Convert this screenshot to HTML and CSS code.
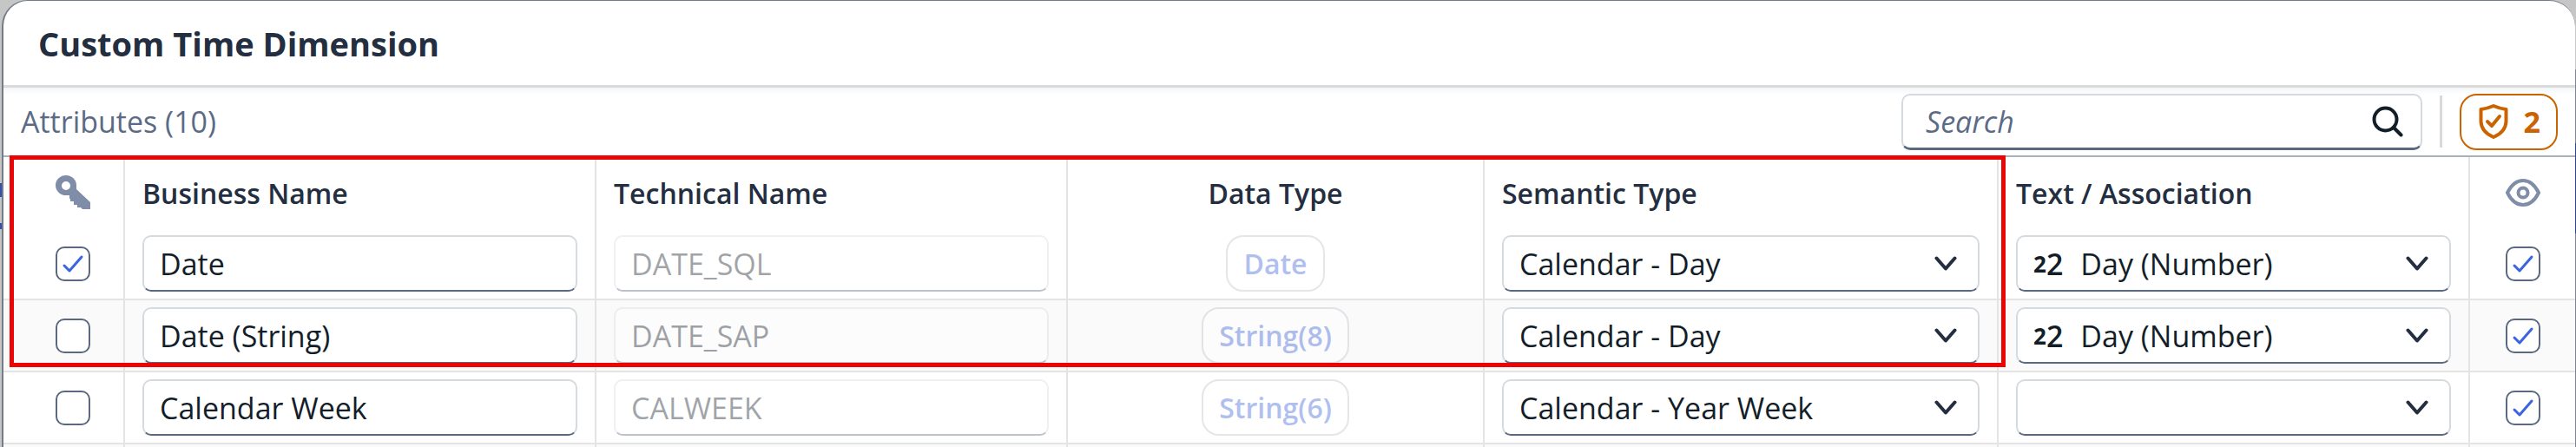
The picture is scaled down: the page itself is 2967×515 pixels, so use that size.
FILE: index.html
```html
<!DOCTYPE html>
<html lang="en">
<head>
  <meta charset="UTF-8">
  <meta name="viewport" content="width=device-width, initial-scale=1.0">
  <title>Custom Time Dimension</title>
  <link rel="stylesheet" href="styles.css">
</head>
<body>
  <!-- Shared icons -->
  <svg class="sprite" aria-hidden="true">
    <symbol id="chevron" viewBox="0 0 26 18">
      <path d="M2.500 2.500L13 14.500L23.500 2.500" fill="none" stroke="currentColor" stroke-width="4" stroke-linecap="round" stroke-linejoin="round"/>
    </symbol>
  </svg>

  <div class="dialog" role="dialog" aria-labelledby="dialogTitle">
    <header class="dialog-header">
      <h1 id="dialogTitle">Custom Time Dimension</h1>
    </header>

    <div class="toolbar">
      <h2>Attributes (10)</h2>
      <div class="field search">
        <input type="search" placeholder="Search" aria-label="Search">
        <svg class="search-icon" viewBox="0 0 36 36" aria-hidden="true">
          <circle cx="15.500" cy="15.500" r="13" fill="none" stroke="currentColor" stroke-width="4"/>
          <path d="M25.500 25.500L33.500 33.500" stroke="currentColor" stroke-width="4" stroke-linecap="round"/>
        </svg>
      </div>
      <span class="separator"></span>
      <button class="validation" aria-label="2 validation messages">
        <svg viewBox="0 0 34 40" aria-hidden="true">
          <path d="M17 2Q24 5 31.500 6V20Q31 32 17 38Q3 32 2.500 20V6Q10 5 17 2Z" fill="none" stroke="currentColor" stroke-width="4" stroke-linejoin="round"/>
          <path d="M10 20L15 25L24 14" fill="none" stroke="currentColor" stroke-width="4" stroke-linecap="round" stroke-linejoin="round"/>
        </svg>
        <span>2</span>
      </button>
    </div>

    <div class="table-wrap">
      <table>
        <colgroup>
          <col class="col-key">
          <col class="col-name">
          <col class="col-name">
          <col class="col-type">
          <col class="col-semantic">
          <col class="col-name">
          <col class="col-visible">
        </colgroup>
        <thead>
          <tr>
            <th class="key" aria-label="Key">
              <svg class="header-icon" viewBox="0 0 40 40" aria-hidden="true">
                <path fill-rule="evenodd" d="M12 0A12 11.500 0 0 1 24 12V16L40 31V39H31L29 37H25V34H21V30H17V27H16V23H12A12 11.500 0 0 1 12 0ZM12 7A5 5 0 1 0 12 17A5 5 0 1 0 12 7Z" fill="currentColor"/>
              </svg>
            </th>
            <th>Business Name</th>
            <th>Technical Name</th>
            <th class="center">Data Type</th>
            <th>Semantic Type</th>
            <th>Text / Association</th>
            <th class="center" aria-label="Visible">
              <svg class="header-icon" viewBox="0 0 40 40" aria-hidden="true">
                <path d="M2 20Q9 6 20 6T38 20Q31 34 20 34T2 20Z" fill="none" stroke="currentColor" stroke-width="4" stroke-linejoin="round"/>
                <circle cx="20" cy="20" r="5.500" fill="none" stroke="currentColor" stroke-width="4"/>
              </svg>
            </th>
          </tr>
        </thead>
        <tbody>
          <tr>
            <td class="key"><input type="checkbox" aria-label="Key" checked></td>
            <td><input class="field" type="text" aria-label="Business name" value="Date"></td>
            <td><input class="field" type="text" aria-label="Technical name" value="DATE_SQL" disabled></td>
            <td class="center"><button class="type" disabled>Date</button></td>
            <td>
              <div class="field select">
                <select aria-label="Semantic type"><option>Calendar - Day</option></select>
                <svg class="chevron" aria-hidden="true"><use href="#chevron"/></svg>
              </div>
            </td>
            <td>
              <div class="field select">
                <span class="number-icon"><small>2</small>2</span>
                <select aria-label="Text association"><option>Day (Number)</option></select>
                <svg class="chevron" aria-hidden="true"><use href="#chevron"/></svg>
              </div>
            </td>
            <td class="center"><input type="checkbox" aria-label="Visible" checked></td>
          </tr>
          <tr>
            <td class="key"><input type="checkbox" aria-label="Key"></td>
            <td><input class="field" type="text" aria-label="Business name" value="Date (String)"></td>
            <td><input class="field" type="text" aria-label="Technical name" value="DATE_SAP" disabled></td>
            <td class="center"><button class="type" disabled>String(8)</button></td>
            <td>
              <div class="field select">
                <select aria-label="Semantic type"><option>Calendar - Day</option></select>
                <svg class="chevron" aria-hidden="true"><use href="#chevron"/></svg>
              </div>
            </td>
            <td>
              <div class="field select">
                <span class="number-icon"><small>2</small>2</span>
                <select aria-label="Text association"><option>Day (Number)</option></select>
                <svg class="chevron" aria-hidden="true"><use href="#chevron"/></svg>
              </div>
            </td>
            <td class="center"><input type="checkbox" aria-label="Visible" checked></td>
          </tr>
          <tr>
            <td class="key"><input type="checkbox" aria-label="Key"></td>
            <td><input class="field" type="text" aria-label="Business name" value="Calendar Week"></td>
            <td><input class="field" type="text" aria-label="Technical name" value="CALWEEK" disabled></td>
            <td class="center"><button class="type" disabled>String(6)</button></td>
            <td>
              <div class="field select">
                <select aria-label="Semantic type"><option>Calendar - Year Week</option></select>
                <svg class="chevron" aria-hidden="true"><use href="#chevron"/></svg>
              </div>
            </td>
            <td>
              <div class="field select">
                <select aria-label="Text association"><option></option></select>
                <svg class="chevron" aria-hidden="true"><use href="#chevron"/></svg>
              </div>
            </td>
            <td class="center"><input type="checkbox" aria-label="Visible" checked></td>
          </tr>
          <tr>
            <td></td><td></td><td></td><td></td><td></td><td></td><td></td>
          </tr>
        </tbody>
      </table>
      <!-- Marks the date rows -->
      <div class="highlight"></div>
    </div>
  </div>
</body>
</html>
```

FILE: styles.css
```css
* {
  box-sizing: border-box;
}
body {
  margin: 0;
  padding: 0 1px 0 2px;
  height: 100vh;
  overflow: hidden;
  background-color: #c6c6c6;
  /* Dimmed page edges behind the dialog */
  background-image:
    linear-gradient(transparent 211px, #3450a8 211px 227px, transparent 227px 257px, #3450a8 257px 264px, transparent 264px),
    linear-gradient(transparent 80px, #7f848c 80px 165px, #2b458c 165px 269px, #7f848c 269px);
  background-position: left top, right top;
  background-size: 2px 100%, 1px 100%;
  background-repeat: no-repeat;
  font-family: "Open Sans", "Noto Sans", sans-serif;
  font-size: 34px;
  color: #131e29;
}
input, select, button {
  font: inherit;
  color: inherit;
  margin: 0;
}
.sprite {
  display: none;
}
.dialog {
  height: 100vh;
  overflow: hidden;
  background-color: white;
  border-top: 1px solid #747c8a;
  border-left: 2px solid #747c8a;
  border-radius: 30px 30px 0 0;
}
.dialog-header {
  display: flex;
  align-items: center;
  height: 100px;
  padding: 0 40px;
  border-bottom: 3px solid #d9dada;
}
h1 {
  margin: 0;
  font-size: 38px;
  font-weight: 700;
  color: #232e40;
}
.toolbar {
  display: flex;
  align-items: center;
  height: 80px;
  padding: 0 20px;
  border-bottom: 2px solid #a9b1be;
  background: linear-gradient(#f2f5f8, white 8px);
}
h2 {
  flex: 1;
  margin: 0;
  font-size: 34px;
  font-weight: 400;
  color: #5b6b86;
}

/* Inputs and drop-downs */
.field {
  display: flex;
  align-items: center;
  width: 100%;
  height: 65px;
  padding: 0 18px;
  background-color: white;
  border: 2px solid #d5dade;
  border-bottom-color: #5b6880;
  border-radius: 10px;
}
.field:disabled {
  opacity: 0.4;
}
.field select, .search input {
  flex: 1;
  min-width: 0;
  height: 100%;
  padding: 0;
  background: none;
  border: none;
  outline: none;
  appearance: none;
}
.select {
  padding-right: 24px;
}
.chevron {
  flex: none;
  width: 26px;
  height: 18px;
  color: #232e40;
  pointer-events: none;
}
.number-icon {
  margin-right: 20px;
  font-weight: 600;
}
.number-icon small {
  font-size: 26px;
  font-weight: 700;
  vertical-align: 3px;
}
.search {
  width: 600px;
  padding: 0 20px 0 26px;
  border-bottom-width: 3px;
}
.search input::placeholder {
  color: #5b6b86;
  font-style: italic;
  opacity: 1;
}
.search-icon {
  width: 36px;
  height: 36px;
}
.separator {
  width: 3px;
  height: 60px;
  margin: 0 20px;
  background-color: #d9d9d9;
}
.validation {
  display: flex;
  align-items: center;
  justify-content: space-between;
  width: 113px;
  height: 65px;
  padding: 0 18px 0 20px;
  color: #c96400;
  background-color: white;
  border: 2px solid #c96400;
  border-radius: 20px;
  font-weight: 700;
}
.validation svg {
  width: 34px;
  height: 40px;
}

/* Attribute table */
.table-wrap {
  position: relative;
}
table {
  width: 100%;
  table-layout: fixed;
  border-collapse: separate;
  border-spacing: 0;
}
.col-key {
  width: 140px;
}
.col-name {
  width: 543px;
}
.col-type {
  width: 480px;
}
.col-semantic {
  width: 592px;
}
.col-visible {
  width: 121px;
}
th, td {
  height: 83px;
  padding: 0 20px;
  border-right: 2px solid #e4e4e4;
  text-align: left;
  vertical-align: middle;
}
th {
  height: 82px;
  font-size: 32px;
  font-weight: 600;
  color: #232e40;
}
td {
  border-bottom: 2px solid #e4e4e4;
}
th:last-child, td:last-child {
  border-right: none;
}
tbody tr:nth-child(even) {
  background-color: #fafafa;
}
.key {
  padding: 0 0 0 60px;
}
.center {
  text-align: center;
}
.header-icon {
  display: block;
  width: 40px;
  height: 40px;
  color: #7f8da8;
}
input[type="checkbox"] {
  display: block;
  width: 40px;
  height: 40px;
  background-color: white;
  border: 2px solid #5b6880;
  border-radius: 10px;
  appearance: none;
}
input[type="checkbox"]:checked {
  background-image: url("data:image/svg+xml,%3Csvg xmlns='http://www.w3.org/2000/svg' viewBox='0 0 36 36'%3E%3Cpath d='M8 20L14 26L28 10' fill='none' stroke='%233b64e0' stroke-width='3' stroke-linecap='round' stroke-linejoin='round'/%3E%3C/svg%3E");
}
.type {
  display: block;
  height: 65px;
  padding: 0 18px;
  color: #3a62dc;
  background-color: white;
  border: 2px solid #bcc1cc;
  border-radius: 20px;
  font-size: 32px;
  font-weight: 600;
  opacity: 0.4;
}
.center .header-icon,
.center input,
.center .type {
  margin: 0 auto;
}
.highlight {
  position: absolute;
  top: -2px;
  left: 7px;
  width: 77.6%;
  height: 244px;
  border: 5px solid #ea0606;
  pointer-events: none;
}
```
